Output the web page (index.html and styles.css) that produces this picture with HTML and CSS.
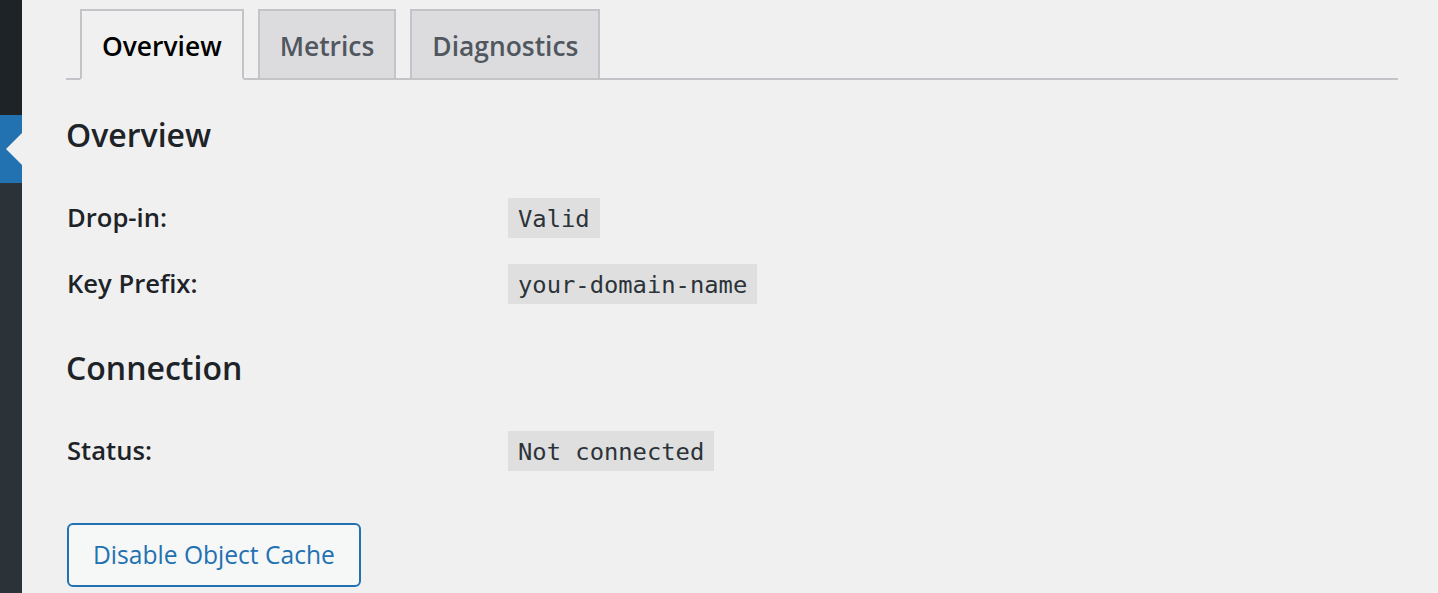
FILE: index.html
```html
<!DOCTYPE html>
<html lang="en">
<head>
<meta charset="utf-8">
<title>Object Cache</title>
<link rel="stylesheet" href="styles.css">
</head>
<body>
<div class="sidebar">
  <div class="sb-top"></div>
  <div class="sb-current"></div>
  <div class="sb-rest"></div>
</div>
<main class="main">
  <nav class="tabs">
    <a class="tab tab-active">Overview</a>
    <a class="tab">Metrics</a>
    <a class="tab">Diagnostics</a>
  </nav>

  <h2 class="heading heading-first">Overview</h2>
  <div class="rows">
    <div class="row">
      <div class="label">Drop-in:</div>
      <code class="code">Valid</code>
    </div>
    <div class="row">
      <div class="label">Key Prefix:</div>
      <code class="code">your-domain-name</code>
    </div>
  </div>

  <h2 class="heading">Connection</h2>
  <div class="rows">
    <div class="row">
      <div class="label">Status:</div>
      <code class="code">Not connected</code>
    </div>
  </div>

  <div class="actions">
    <button class="button">Disable Object Cache</button>
  </div>
</main>
</body>
</html>
```

FILE: styles.css
```css
html, body {
  margin: 0;
  padding: 0;
}
body {
  background: #f0f0f1;
  color: #1d2327;
  font-family: "Open Sans", "Noto Sans", sans-serif;
  display: flex;
  min-height: 100vh;
  overflow: hidden;
}
.sidebar {
  width: 22px;
  flex: 0 0 22px;
  display: flex;
  flex-direction: column;
  height: 593px;
}
.sb-top {
  height: 115px;
  background: #1d2327;
}
.sb-current {
  height: 68px;
  background: #2271b1;
  position: relative;
}
.sb-current::after {
  content: "";
  position: absolute;
  right: 0;
  top: 50%;
  margin-top: -16px;
  border: 16px solid transparent;
  border-left-width: 0;
  border-right-color: #f0f0f1;
}
.sb-rest {
  flex: 1;
  background: #2c3338;
}
.main {
  flex: 1;
  padding: 9px 40px 0 44px;
}
.tabs {
  display: flex;
  align-items: flex-end;
  gap: 14px;
  padding-left: 14px;
  border-bottom: 2px solid #c3c4c7;
}
.tab {
  display: block;
  border: 2px solid #c3c4c7;
  border-bottom: none;
  background: #dcdcde;
  color: #50575e;
  font-size: 26.4px;
  font-weight: 600;
  line-height: 48px;
  padding: 11px 20px 8px;
  height: 48px;
}
.tab-active {
  background: #f0f0f1;
  color: #000;
  border-bottom: 2px solid #f0f0f1;
  margin-bottom: -2px;
}
.heading {
  margin: 42px 0 0;
  font-size: 32px;
  font-weight: 600;
  line-height: 44px;
  color: #1d2327;
}
.heading-first {
  margin-top: 33px;
}
.rows {
  display: flex;
  flex-direction: column;
  gap: 26px;
  margin-top: 41px;
}
.row {
  display: flex;
  align-items: center;
}
.label {
  width: 441px;
  flex: 0 0 441px;
  padding-left: 1px;
  font-size: 25.6px;
  font-weight: 600;
  line-height: 40px;
}
.code {
  display: inline-block;
  font-family: "DejaVu Sans Mono", "Liberation Mono", monospace;
  font-size: 23.8px;
  line-height: 30px;
  padding: 6px 10px 4px;
  background: rgba(0, 0, 0, 0.07);
  color: #2c3338;
}
.actions {
  margin-top: 52px;
  padding-left: 1px;
}
.button {
  font-family: "Open Sans", "Noto Sans", sans-serif;
  font-size: 24.6px;
  line-height: 59.5px;
  padding: 0 24px;
  color: #2271b1;
  background: #f6f7f7;
  border: 2px solid #2271b1;
  border-radius: 6px;
  cursor: pointer;
}
```
